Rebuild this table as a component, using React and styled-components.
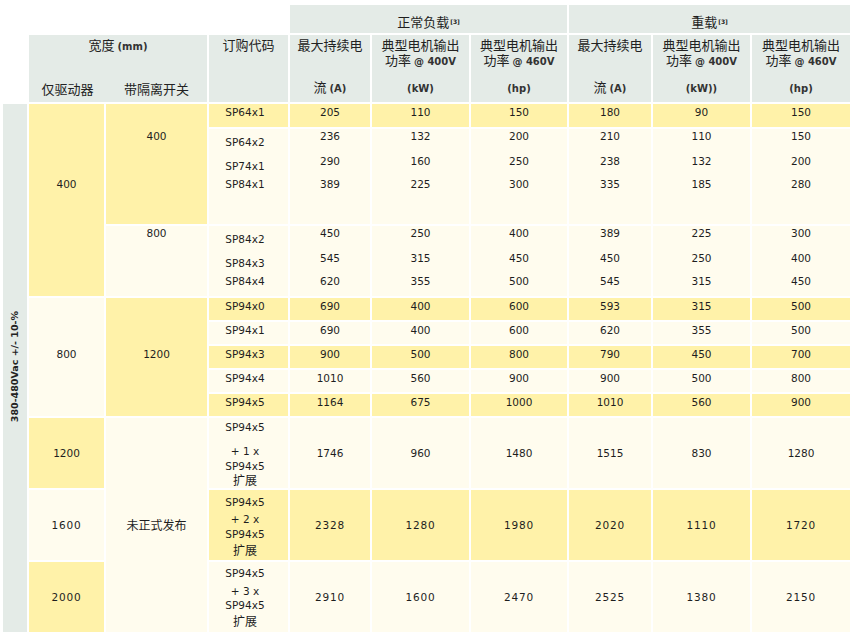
import styled, { createGlobalStyle } from "styled-components";

const tones = {
  yellow: "#fff2a9",
  cream: "#fffcee",
  gray: "#e4ebe7",
  none: "transparent",
};

const GlobalStyle = createGlobalStyle`
  body {
    margin: 0;
    background: #ffffff;
    color: #1e1e1e;
    font-family: "DejaVu Sans", "Noto Sans CJK SC", sans-serif;
  }
`;

const colWidths = [24, 75, 101, 79, 80, 97, 96, 82, 97, 98];

const Table = styled.table`
  border-collapse: separate;
  border-spacing: 2px;
  table-layout: fixed;
  width: 851px;
  margin: 3px 0 0 1px;
`;

const Row = styled.tr`
  height: ${(p) => p.$h}px;
`;

const GroupHead = styled.th`
  background: ${(p) => tones[p.$tone || "gray"]};
  padding: 6px 0 0;
  font-weight: normal;
  font-size: 13px;
  line-height: 16px;
  font-family: "Noto Sans CJK SC", sans-serif;
  vertical-align: middle;
  text-align: center;
`;

const Sup = styled.span`
  font-family: "DejaVu Sans", sans-serif;
  font-weight: bold;
  font-size: 6px;
  vertical-align: 3px;
  margin-left: 1px;
`;

const HeadCell = styled.th`
  background: ${(p) => tones[p.$tone || "gray"]};
  padding: 0;
  font-weight: normal;
  vertical-align: top;
  text-align: center;
`;

const HeadInner = styled.div`
  box-sizing: border-box;
  height: 67px;
  padding: 2px 0 6px;
  display: flex;
  flex-direction: column;
  justify-content: space-between;
  font-family: "Noto Sans CJK SC", sans-serif;
  font-size: 13px;
  line-height: 15px;
  color: #222;
`;

const SubHeads = styled.div`
  display: grid;
  grid-template-columns: 77px 1fr;
`;

const Unit = styled.span`
  font-family: "DejaVu Sans", sans-serif;
  font-weight: bold;
  font-size: 10px;
  color: #333;
`;

const Cell = styled.td`
  background: ${(p) => tones[p.$tone]};
  padding: ${(p) => p.$pt || 0}px 0 0;
  vertical-align: ${(p) => (p.$mid ? "middle" : "top")};
  text-align: center;
  font-size: 10.5px;
  line-height: 14px;
  letter-spacing: ${(p) => (p.$wide ? "0.8px" : "0")};
  white-space: nowrap;
`;

const CodeCell = styled(Cell)`
  padding-right: 7px;
`;

const Line = styled.div`
  margin-top: ${(p) => p.$mt || 0}px;
  line-height: 14px;
`;

const Cjk = styled.span`
  font-family: "Noto Sans CJK SC", sans-serif;
  font-size: 12px;
  letter-spacing: 0;
`;

const SideLabel = styled.div`
  display: inline-block;
  writing-mode: vertical-rl;
  transform: rotate(180deg);
  font-weight: bold;
  font-size: 9.5px;
  line-height: 12px;
  white-space: nowrap;
  color: #222;
`;

const ValueHead = ({ top, unit }) => (
  <HeadCell>
    <HeadInner>
      <div>{top}</div>
      <div>{unit}</div>
    </HeadInner>
  </HeadCell>
);

const powerTop = (volt) => (
  <>
    典型电机输出
    <br />
    功率 <Unit>@ {volt}</Unit>
  </>
);

const valueHeads = [
  { top: "最大持续电", unit: <>流 <Unit>(A)</Unit></> },
  { top: powerTop("400V"), unit: <Unit>(kW)</Unit> },
  { top: powerTop("460V"), unit: <Unit>(hp)</Unit> },
  { top: "最大持续电", unit: <>流 <Unit>(A)</Unit></> },
  { top: powerTop("400V"), unit: <Unit>(kW))</Unit> },
  { top: powerTop("460V"), unit: <Unit>(hp)</Unit> },
];

// rows where each cell holds three stacked entries
const blockRows = [
  {
    h: 95,
    codes: ["SP64x2", "SP74x1", "SP84x1"],
    values: [
      [236, 290, 389],
      [132, 160, 225],
      [200, 250, 300],
      [210, 238, 335],
      [110, 132, 185],
      [150, 200, 280],
    ],
  },
  {
    h: 70,
    codes: ["SP84x2", "SP84x3", "SP84x4"],
    values: [
      [450, 545, 620],
      [250, 315, 355],
      [400, 450, 500],
      [389, 450, 545],
      [225, 250, 315],
      [300, 400, 450],
    ],
  },
];

const stripeRows = [
  { code: "SP94x0", tone: "yellow", values: [690, 400, 600, 593, 315, 500] },
  { code: "SP94x1", tone: "cream", values: [690, 400, 600, 620, 355, 500] },
  { code: "SP94x3", tone: "yellow", values: [900, 500, 800, 790, 450, 700] },
  { code: "SP94x4", tone: "cream", values: [1010, 560, 900, 900, 500, 800] },
  { code: "SP94x5", tone: "yellow", values: [1164, 675, 1000, 1010, 560, 900] },
];

const expansionRows = [
  { drive: 1200, driveTone: "yellow", tone: "cream", n: 1, pt: 2, gaps: [0, 10, 1, 0], wide: false, values: [1746, 960, 1480, 1515, 830, 1280] },
  { drive: 1600, driveTone: "cream", tone: "yellow", n: 2, pt: 5, gaps: [0, 3, 1, 2], wide: true, values: [2328, 1280, 1980, 2020, 1110, 1720] },
  { drive: 2000, driveTone: "yellow", tone: "cream", n: 3, pt: 4, gaps: [0, 4, 0, 2], wide: true, values: [2910, 1600, 2470, 2525, 1380, 2150] },
];

const codeGaps = [0, 10, 4];
const valueGaps = [0, 11, 9];

const App = () => {
  return (
    <>
      <GlobalStyle />
      <Table>
        <colgroup>
          {colWidths.map((w, i) => (
            <col key={i} style={{ width: w }} />
          ))}
        </colgroup>
        <thead>
          <Row $h={28}>
            <GroupHead $tone="none" colSpan={4} />
            <GroupHead colSpan={3}>
              正常负载<Sup>[3]</Sup>
            </GroupHead>
            <GroupHead colSpan={3}>
              重载<Sup>[3]</Sup>
            </GroupHead>
          </Row>
          <Row $h={67}>
            <HeadCell $tone="none" />
            <HeadCell colSpan={2}>
              <HeadInner>
                <div>
                  宽度 <Unit>(mm)</Unit>
                </div>
                <SubHeads>
                  <span>仅驱动器</span>
                  <span>带隔离开关</span>
                </SubHeads>
              </HeadInner>
            </HeadCell>
            <HeadCell>
              <HeadInner>
                <div>订购代码</div>
              </HeadInner>
            </HeadCell>
            {valueHeads.map((v, i) => (
              <ValueHead key={i} top={v.top} unit={v.unit} />
            ))}
          </Row>
        </thead>
        <tbody>
          <Row $h={23}>
            <Cell $tone="gray" rowSpan={11} $mid>
              <SideLabel>380-480Vac +/- 10-%</SideLabel>
            </Cell>
            <Cell $tone="yellow" rowSpan={3} $pt={73}>400</Cell>
            <Cell $tone="yellow" rowSpan={2} $pt={25}>400</Cell>
            <CodeCell $tone="yellow" $pt={1}>SP64x1</CodeCell>
            {[205, 110, 150, 180, 90, 150].map((v, i) => (
              <Cell key={i} $tone="yellow" $pt={1}>{v}</Cell>
            ))}
          </Row>
          {blockRows.map((r, ri) => (
            <Row key={ri} $h={r.h}>
              {ri === 1 && <Cell $tone="cream" $pt={0}>800</Cell>}
              <CodeCell $tone="cream" $pt={6}>
                {r.codes.map((c, i) => (
                  <Line key={i} $mt={codeGaps[i]}>{c}</Line>
                ))}
              </CodeCell>
              {r.values.map((col, ci) => (
                <Cell key={ci} $tone="cream">
                  {col.map((v, i) => (
                    <Line key={i} $mt={valueGaps[i]}>{v}</Line>
                  ))}
                </Cell>
              ))}
            </Row>
          ))}
          {stripeRows.map((r, ri) => (
            <Row key={r.code} $h={22}>
              {ri === 0 && (
                <>
                  <Cell $tone="cream" rowSpan={5} $pt={49}>800</Cell>
                  <Cell $tone="yellow" rowSpan={5} $pt={49}>1200</Cell>
                </>
              )}
              <CodeCell $tone={r.tone} $pt={1}>{r.code}</CodeCell>
              {r.values.map((v, i) => (
                <Cell key={i} $tone={r.tone} $pt={1}>{v}</Cell>
              ))}
            </Row>
          ))}
          {expansionRows.map((r, ri) => (
            <Row key={r.drive} $h={70}>
              <Cell $tone={r.driveTone} $mid $wide={r.wide}>{r.drive}</Cell>
              {ri === 0 && (
                <Cell $tone="cream" rowSpan={3} $mid>
                  <Cjk>未正式发布</Cjk>
                </Cell>
              )}
              <CodeCell $tone={r.tone} $pt={r.pt}>
                {["SP94x5", `+ ${r.n} x`, "SP94x5"].map((t, i) => (
                  <Line key={i} $mt={r.gaps[i]}>{t}</Line>
                ))}
                <Line $mt={r.gaps[3]}>
                  <Cjk>扩展</Cjk>
                </Line>
              </CodeCell>
              {r.values.map((v, i) => (
                <Cell key={i} $tone={r.tone} $mid $wide={r.wide}>{v}</Cell>
              ))}
            </Row>
          ))}
        </tbody>
      </Table>
    </>
  );
};

export default App;
